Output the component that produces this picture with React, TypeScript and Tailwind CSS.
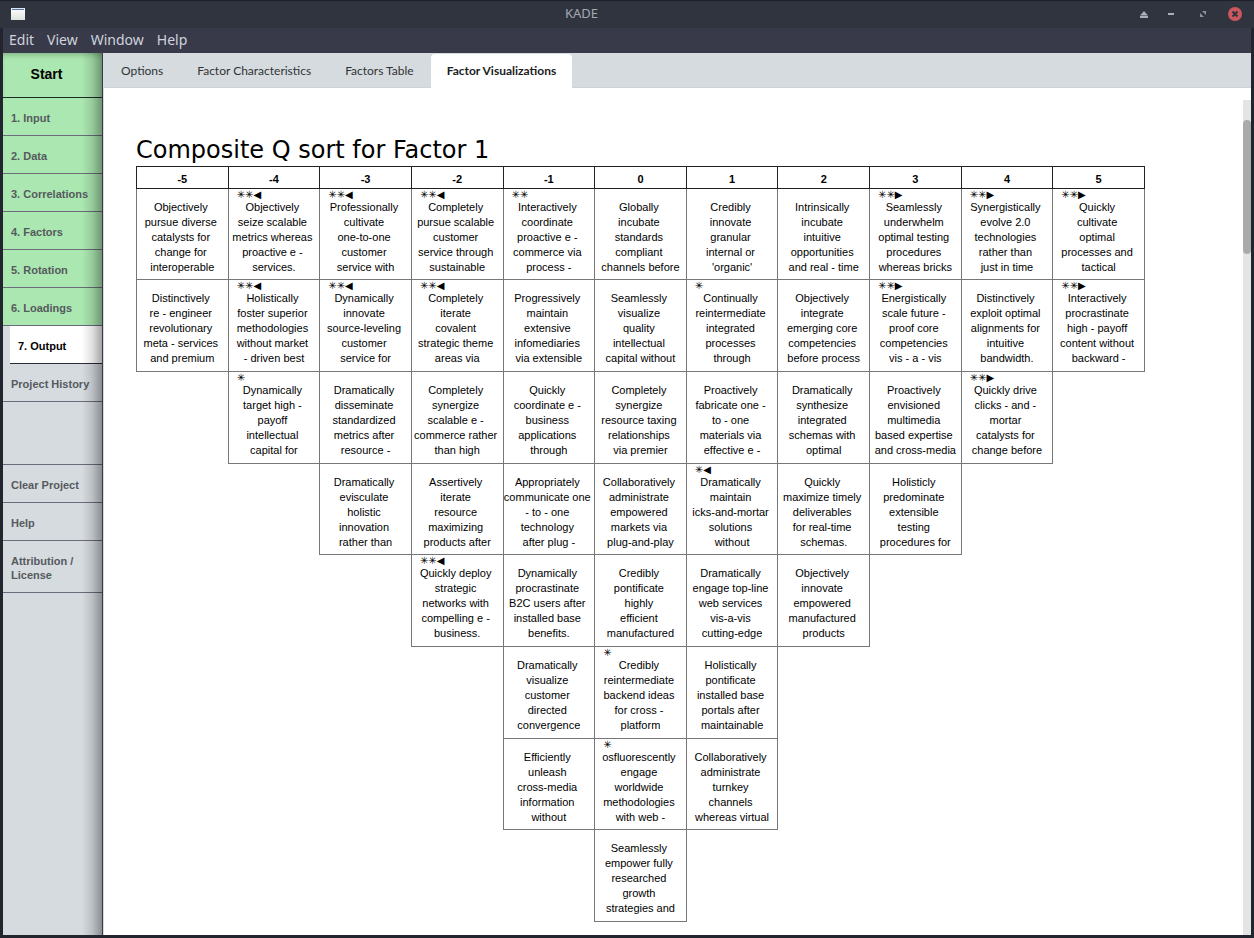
import { useState } from "react";

type Cell = { mark?: string; lines: string[] } | null;

const c = (text: string, mark?: string): Cell => ({ mark, lines: text.split("|") });

const L = "✳✳◀";
const R = "✳✳▶";

const scores = [-5, -4, -3, -2, -1, 0, 1, 2, 3, 4, 5];

const rows: Cell[][] = [
  [
    c("Objectively|pursue diverse|catalysts for|change for|interoperable"),
    c("Objectively|seize scalable|metrics whereas|proactive e -|services.", L),
    c("Professionally|cultivate|one-to-one|customer|service with", L),
    c("Completely|pursue scalable|customer|service through|sustainable", L),
    c("Interactively|coordinate|proactive e -|commerce via|process -", "✳✳"),
    c("Globally|incubate|standards|compliant|channels before"),
    c("Credibly|innovate|granular|internal or|'organic'"),
    c("Intrinsically|incubate|intuitive|opportunities|and real - time"),
    c("Seamlessly|underwhelm|optimal testing|procedures|whereas bricks", R),
    c("Synergistically|evolve 2.0|technologies|rather than|just in time", R),
    c("Quickly|cultivate|optimal|processes and|tactical", R),
  ],
  [
    c("Distinctively|re - engineer|revolutionary|meta - services|and premium"),
    c("Holistically|foster superior|methodologies|without market|- driven best", L),
    c("Dynamically|innovate|source-leveling|customer|service for", L),
    c("Completely|iterate|covalent|strategic theme|areas via", L),
    c("Progressively|maintain|extensive|infomediaries|via extensible"),
    c("Seamlessly|visualize|quality|intellectual|capital without"),
    c("Continually|reintermediate|integrated|processes|through", "✳"),
    c("Objectively|integrate|emerging core|competencies|before process"),
    c("Energistically|scale future -|proof core|competencies|vis - a - vis", R),
    c("Distinctively|exploit optimal|alignments for|intuitive|bandwidth."),
    c("Interactively|procrastinate|high - payoff|content without|backward -", R),
  ],
  [
    null,
    c("Dynamically|target high -|payoff|intellectual|capital for", "✳"),
    c("Dramatically|disseminate|standardized|metrics after|resource -"),
    c("Completely|synergize|scalable e -|commerce rather|than high"),
    c("Quickly|coordinate e -|business|applications|through"),
    c("Completely|synergize|resource taxing|relationships|via premier"),
    c("Proactively|fabricate one -|to - one|materials via|effective e -"),
    c("Dramatically|synthesize|integrated|schemas with|optimal"),
    c("Proactively|envisioned|multimedia|based expertise|and cross-media"),
    c("Quickly drive|clicks - and -|mortar|catalysts for|change before", R),
    null,
  ],
  [
    null,
    null,
    c("Dramatically|evisculate|holistic|innovation|rather than"),
    c("Assertively|iterate|resource|maximizing|products after"),
    c("Appropriately|communicate one|- to - one|technology|after plug -"),
    c("Collaboratively|administrate|empowered|markets via|plug-and-play"),
    c("Dramatically|maintain|icks-and-mortar|solutions|without", "✳◀"),
    c("Quickly|maximize timely|deliverables|for real-time|schemas."),
    c("Holisticly|predominate|extensible|testing|procedures for"),
    null,
    null,
  ],
  [
    null,
    null,
    null,
    c("Quickly deploy|strategic|networks with|compelling e -|business.", L),
    c("Dynamically|procrastinate|B2C users after|installed base|benefits."),
    c("Credibly|pontificate|highly|efficient|manufactured"),
    c("Dramatically|engage top-line|web services|vis-a-vis|cutting-edge"),
    c("Objectively|innovate|empowered|manufactured|products"),
    null,
    null,
    null,
  ],
  [
    null,
    null,
    null,
    null,
    c("Dramatically|visualize|customer|directed|convergence"),
    c("Credibly|reintermediate|backend ideas|for cross -|platform", "✳"),
    c("Holistically|pontificate|installed base|portals after|maintainable"),
    null,
    null,
    null,
    null,
  ],
  [
    null,
    null,
    null,
    null,
    c("Efficiently|unleash|cross-media|information|without"),
    c("osfluorescently|engage|worldwide|methodologies|with web -", "✳"),
    c("Collaboratively|administrate|turnkey|channels|whereas virtual"),
    null,
    null,
    null,
    null,
  ],
  [
    null,
    null,
    null,
    null,
    null,
    c("Seamlessly|empower fully|researched|growth|strategies and"),
    null,
    null,
    null,
    null,
    null,
  ],
];

function TitleBar() {
  return (
    <header className="flex h-7 items-center border-t border-[#1d2028] bg-[#2f343f] px-2 pb-px">
      <svg className="ml-[2px] size-4" viewBox="0 0 16 16" aria-hidden="true">
        <defs>
          <linearGradient id="win" x1="0" y1="0" x2="0" y2="1">
            <stop offset="0" stopColor="#ffffff" />
            <stop offset="1" stopColor="#dfe2dc" />
          </linearGradient>
        </defs>
        <rect x="1" y="2" width="14" height="12" fill="url(#win)" />
        <rect x="1" y="2" width="14" height="1" fill="#dde6f2" />
        <rect x="2" y="3" width="12" height="1" fill="#4f76b0" />
      </svg>
      <h1 className="flex-1 text-center font-['Noto_Sans',sans-serif] text-[13px] text-[#a3a8b3]">KADE</h1>
      <div className="flex items-center gap-[18px] pr-1">
        <div className="flex items-center gap-[13px]">
          <button type="button" aria-label="Shade" className="size-[14px]">
            <svg viewBox="0 0 14 14" className="size-[14px]" fill="#a9aeb8">
              <path d="M7 4 L11 8.5 H3 Z" />
              <rect x="3" y="9" width="8" height="2" />
            </svg>
          </button>
          <button type="button" aria-label="Minimize" className="size-[14px]">
            <svg viewBox="0 0 14 14" className="size-[14px]" fill="#a9aeb8">
              <rect x="4" y="6" width="6" height="2" />
            </svg>
          </button>
        </div>
        <button type="button" aria-label="Restore" className="size-[14px]">
          <svg viewBox="0 0 14 14" className="size-[14px]" fill="#8b909b">
            <path d="M6 4 H10 V8 Z M4 6 L8 10 H4 Z" />
          </svg>
        </button>
        <button type="button" aria-label="Close" className="size-[14px]">
          <svg viewBox="0 0 14 14" className="size-[14px]">
            <circle cx="7" cy="7" r="7" fill="#cc575d" />
            <path d="M4.5 4.5 L9.5 9.5 M9.5 4.5 L4.5 9.5" stroke="#2f343f" strokeWidth="2" />
          </svg>
        </button>
      </div>
    </header>
  );
}

const steps = [
  "1. Input",
  "2. Data",
  "3. Correlations",
  "4. Factors",
  "5. Rotation",
  "6. Loadings",
];

const itemBase =
  "block w-full border-b border-[#6b6b7a] pl-2 pt-[3px] text-left text-[11px] leading-[14px] font-bold text-[#555a5e]";

function Sidebar() {
  return (
    <nav className="relative w-[100px] shrink-0 border-r border-[#383a4a] bg-[#d6dbdf] font-['Liberation_Sans',sans-serif]">
      <button
        type="button"
        className="block h-[45px] w-full border-b border-[#1c2a24] bg-[#abe7b0] pr-3 pb-px text-center text-[14px] font-bold text-black shadow-[inset_0_5px_6px_-4px_rgba(0,0,0,0.3)]"
      >
        Start
      </button>
      {steps.map((s) => (
        <button key={s} type="button" className={`${itemBase} h-[38px] bg-[#abe7b0]`}>
          {s}
        </button>
      ))}
      <div className="pl-[7px]">
        <button
          type="button"
          className="block h-[38px] w-full border-b border-[#2b2b3a] bg-white pt-[3px] pl-2 text-left text-[11px] font-bold text-black"
        >
          7. Output
        </button>
      </div>
      <button type="button" className={`${itemBase} h-[38px]`}>
        Project History
      </button>
      <div className="h-[63px] border-b border-[#6b6b7a]" />
      <button type="button" className={`${itemBase} h-[38px]`}>
        Clear Project
      </button>
      <button type="button" className={`${itemBase} h-[38px]`}>
        Help
      </button>
      <button type="button" className={`${itemBase} h-[52px]`}>
        Attribution /<br />
        License
      </button>
      <div className="pointer-events-none absolute inset-y-0 right-0 w-5 bg-linear-to-r from-black/0 via-black/12 to-black/35" />
    </nav>
  );
}

const tabs = ["Options", "Factor Characteristics", "Factors Table", "Factor Visualizations"];

function Tabs() {
  const [active, setActive] = useState(3);
  return (
    <div
      role="tablist"
      className="flex h-[35px] border-b border-[#d0d3d5] bg-[#d6dbdf] font-['Lato',sans-serif] text-[12px]"
    >
      {tabs.map((t, i) => (
        <button
          key={t}
          type="button"
          role="tab"
          aria-selected={i === active}
          onClick={() => setActive(i)}
          className={
            i === active
              ? "mt-px -mb-px rounded-t-sm bg-white px-4 font-bold text-[#1b1c1d]"
              : "px-[17px] pt-[2px] text-[#2f3336]"
          }
        >
          {t}
        </button>
      ))}
    </div>
  );
}

function QSort() {
  return (
    <div className="flex-1 pt-[34px] pb-[13px] pl-8">
      <h2 className="font-['DejaVu_Sans',sans-serif] text-[24px] leading-8 text-black">
        Composite Q sort for Factor 1
      </h2>
      <table className="w-[1009px] table-fixed border-collapse font-['Liberation_Sans',sans-serif] text-[11px] leading-[15px] text-black">
        <thead>
          <tr className="h-[22px]">
            {scores.map((s) => (
              <th key={s} scope="col" className="border border-[#222] p-0 pt-1 font-bold">
                {s}
              </th>
            ))}
          </tr>
        </thead>
        <tbody>
          {rows.map((row, r) => (
            <tr key={r} className="h-[92px] nth-[3n+1]:h-[91px]">
              {row.map((cell, i) =>
                cell ? (
                  <td key={i} className="border border-[#777] p-0 align-top">
                    <div className="h-[11px] pl-2 text-left font-['DejaVu_Sans',sans-serif] text-[10px] leading-[11px]">
                      {cell.mark}
                    </div>
                    <p className="text-center whitespace-pre">{cell.lines.join(" \n")}</p>
                  </td>
                ) : (
                  <td key={i} className="p-0" />
                )
              )}
            </tr>
          ))}
        </tbody>
      </table>
    </div>
  );
}

export default function App() {
  return (
    <div className="flex min-h-screen flex-col bg-[#22252e]">
      <TitleBar />
      <div className="mx-[3px] mb-[3px] flex flex-1 flex-col">
        <div className="flex h-[25px] items-center gap-[13px] bg-[#383a4a] px-[6px] pb-[2px] font-['Noto_Sans',sans-serif] text-[14px] text-[#cfd3dc]">
          {["Edit", "View", "Window", "Help"].map((m) => (
            <button key={m} type="button">
              {m}
            </button>
          ))}
        </div>
        <div className="flex flex-1">
          <Sidebar />
          <main className="flex min-w-0 flex-1 flex-col border-l border-[#d6dbdf] bg-white">
            <Tabs />
            <div className="mt-3 flex flex-1">
              <QSort />
              <div className="w-2 bg-[#e4e4e4] pt-5">
                <div className="h-[134px] rounded bg-[#aaaaaa]" />
              </div>
            </div>
          </main>
        </div>
      </div>
    </div>
  );
}
